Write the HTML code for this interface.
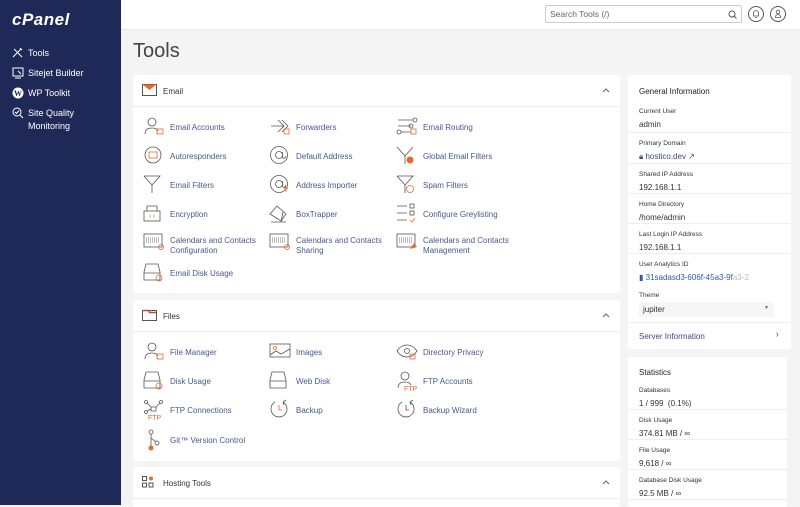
<!DOCTYPE html>
<html><head><meta charset="utf-8"><style>
*{box-sizing:border-box;margin:0;padding:0}
body{width:800px;height:505px;overflow:hidden;background:#f4f4f5;font-family:"Liberation Sans",sans-serif;position:relative;color:#333}
.side{position:absolute;left:0;top:0;width:121px;height:505px;background:#1f2957;color:#fff}
.logo{position:absolute;left:12px;top:10px;font-size:17px;font-weight:bold;font-style:italic;letter-spacing:0.5px}
.nav{position:absolute;left:12px;font-size:9px;color:#fff}
.nav svg{position:absolute;left:0;top:0}
.nav span{position:absolute;left:16px;top:0;white-space:nowrap;line-height:12.5px}
.top{position:absolute;left:121px;top:0;width:679px;height:30px;background:#fff;border-bottom:1px solid #e8e8e8}
.search{position:absolute;left:545px;top:5px;width:197px;height:18px;border:1px solid #ccc;border-radius:2px;font-size:8.5px;color:#666;padding:3px 4px}
.circ{position:absolute;top:6px;width:16px;height:16px;border:1px solid #555;border-radius:50%}
h1{position:absolute;left:133px;top:40px;font-size:20px;font-weight:normal;color:#444}
.panel{position:absolute;background:#fff;border-radius:2px}
.ph{position:absolute;left:0;right:0;top:0;height:32px;border-bottom:1px solid #eee;font-size:8px;color:#333}
.ph span{position:absolute;left:30px;top:12px}
.ph svg.ic{position:absolute;left:9px;top:9px}
.ph .car{position:absolute;right:10px;top:13px}
.it{position:absolute;font-size:8px;color:#48598a;line-height:9.5px}
.it svg{position:absolute;left:-27px;top:-7px}
.it svg *{stroke-width:0.8}
.it span{white-space:nowrap}
.rp{position:absolute;background:#fff;border-radius:2px}
.rp h3{position:absolute;left:11px;font-size:8px;font-weight:normal;color:#222}
.row{position:absolute;left:0;right:0;border-bottom:1px solid #eee}
.row .l{position:absolute;left:11px;top:7px;font-size:6.5px;color:#333}
.row .v{position:absolute;left:11px;top:19px;font-size:8px;color:#333}
</style></head><body>
<div class="side">
<div class="logo">cPanel</div>
<div class="nav" style="top:47px"><svg width="11" height="11" viewBox="0 0 11 11" fill="none" stroke="#fff" stroke-width="1"><path d="M1 10L9 2M2 2l8 8M8 1l2 2"/></svg><span>Tools</span></div>
<div class="nav" style="top:67px"><svg width="12" height="12" viewBox="0 0 12 12" fill="none" stroke="#fff" stroke-width="1"><rect x="1" y="1" width="10" height="8"/><path d="M3 11h6M6 4l3 3"/></svg><span>Sitejet Builder</span></div>
<div class="nav" style="top:87px"><svg width="12" height="12" viewBox="0 0 12 12"><circle cx="6" cy="6" r="5.5" fill="#fff"/><text x="6" y="9" font-size="8" text-anchor="middle" fill="#1f2957" font-family="Liberation Serif" font-weight="bold">W</text></svg><span>WP Toolkit</span></div>
<div class="nav" style="top:107px"><svg width="12" height="12" viewBox="0 0 12 12" fill="none" stroke="#fff" stroke-width="1"><circle cx="5" cy="5" r="4"/><path d="M8 8l3 3M3 5l1.5 1.5L7 3.5"/></svg><span>Site Quality<br>Monitoring</span></div>
</div>
<div class="top"></div>
<div class="search">Search Tools (/)<svg style="position:absolute;right:4px;top:4px" width="9" height="9" viewBox="0 0 9 9" fill="none" stroke="#555"><circle cx="4" cy="4" r="3"/><path d="M6 6l2.5 2.5"/></svg></div>
<div class="circ" style="left:748px"><svg width="14" height="14" viewBox="0 0 14 14" fill="none" stroke="#555" stroke-width="0.8"><path d="M4.5 9V6a2.5 2.5 0 0 1 5 0v3zM6 10.5h2"/></svg></div>
<div class="circ" style="left:770px"><svg width="14" height="14" viewBox="0 0 14 14" fill="none" stroke="#555" stroke-width="0.8"><circle cx="7" cy="5" r="1.8"/><path d="M4.5 10.5c0-2 1-3 2.5-3s2.5 1 2.5 3z"/></svg></div>
<h1>Tools</h1>

<div class="panel" style="left:133px;top:75px;width:487px;height:218px">
<div class="ph"><svg class="ic" width="15" height="12" viewBox="0 0 15 12"><rect x="0.5" y="0.5" width="14" height="11" fill="none" stroke="#555"/><path d="M0.5 0.5h14L7.5 6z" fill="#e8672a"/></svg><span>Email</span><svg class="car" width="8" height="5" viewBox="0 0 8 5" fill="none" stroke="#666"><path d="M1 4l3-3 3 3"/></svg></div>
</div>
<div class="panel" style="left:133px;top:300px;width:487px;height:161px">
<div class="ph"><svg class="ic" width="15" height="12" viewBox="0 0 15 12"><rect x="0.5" y="1.5" width="14" height="10" fill="none" stroke="#555"/><path d="M0.5 1.5h6l1 2h7" fill="none" stroke="#b5522a" stroke-width="1.5"/></svg><span>Files</span><svg class="car" width="8" height="5" viewBox="0 0 8 5" fill="none" stroke="#666"><path d="M1 4l3-3 3 3"/></svg></div>
</div>
<div class="panel" style="left:133px;top:467px;width:487px;height:40px">
<div class="ph"><svg class="ic" width="12" height="12" viewBox="0 0 12 12" fill="none" stroke="#555"><rect x="0.5" y="0.5" width="4" height="4"/><rect x="0.5" y="7" width="4" height="4"/><rect x="7" y="7" width="4" height="4"/><circle cx="9" cy="2.5" r="2" fill="#e8672a" stroke="none"/></svg><span>Hosting Tools</span><svg class="car" width="8" height="5" viewBox="0 0 8 5" fill="none" stroke="#666"><path d="M1 4l3-3 3 3"/></svg></div>
</div>

<div class="it" style="left:170px;top:123px"><svg width="22" height="20" viewBox="0 0 22 20" fill="none" stroke="#555"><circle cx="9" cy="6" r="4"/><path d="M2 18c0-5 4-6 7-6s5 1 6 3"/><rect x="14" y="13" width="6" height="5" stroke="#e8672a"/></svg><span>Email Accounts</span></div>
<div class="it" style="left:296px;top:123px"><svg width="22" height="20" viewBox="0 0 22 20" fill="none" stroke="#555"><path d="M2 10h13M9 4l6 6-6 6M13 4l6 6-6 6"/><rect x="15" y="13" width="5" height="5" stroke="#e8672a"/></svg><span>Forwarders</span></div>
<div class="it" style="left:423px;top:123px"><svg width="22" height="20" viewBox="0 0 22 20" fill="none" stroke="#555"><path d="M2 4h15M2 10h13M5 16h10"/><circle cx="19" cy="4" r="2"/><circle cx="15" cy="10" r="2"/><circle cx="3" cy="16" r="2"/><rect x="15" y="13" width="5" height="5" stroke="#e8672a"/></svg><span>Email Routing</span></div>

<div class="it" style="left:170px;top:152px"><svg width="22" height="20" viewBox="0 0 22 20" fill="none" stroke="#555"><circle cx="10" cy="10" r="8"/><rect x="6" y="7" width="8" height="6" stroke="#e8672a"/></svg><span>Autoresponders</span></div>
<div class="it" style="left:296px;top:152px"><svg width="22" height="20" viewBox="0 0 22 20" fill="none" stroke="#555"><circle cx="10" cy="10" r="8.5"/><circle cx="10" cy="10" r="3.5"/><path d="M13.5 7v5c0 2 3 2 3-1"/></svg><span>Default Address</span></div>
<div class="it" style="left:423px;top:152px"><svg width="22" height="20" viewBox="0 0 22 20" fill="none" stroke="#555"><path d="M1 2l8 9v8M17 2l-8 9"/><circle cx="14" cy="15" r="3.5" fill="#e8672a" stroke="none"/></svg><span>Global Email Filters</span></div>

<div class="it" style="left:170px;top:181px"><svg width="22" height="20" viewBox="0 0 22 20" fill="none" stroke="#555"><path d="M1 2h16L9 11v8M1 2l8 9"/></svg><span>Email Filters</span></div>
<div class="it" style="left:296px;top:181px"><svg width="22" height="20" viewBox="0 0 22 20" fill="none" stroke="#555"><circle cx="10" cy="10" r="8.5"/><circle cx="10" cy="10" r="3.5"/><path d="M13.5 7v5c0 2 3 2 3-1"/><path d="M17 18v-5M15 15l2-2 2 2" stroke="#e8672a"/></svg><span>Address Importer</span></div>
<div class="it" style="left:423px;top:181px"><svg width="22" height="20" viewBox="0 0 22 20" fill="none" stroke="#555"><path d="M1 2h16L9 11v8M1 2l8 9"/><circle cx="14" cy="15" r="3.5" stroke="#e8672a"/></svg><span>Spam Filters</span></div>

<div class="it" style="left:170px;top:210px"><svg width="22" height="20" viewBox="0 0 22 20" fill="none" stroke="#555"><rect x="1" y="8" width="16" height="10"/><path d="M4 8V3h10v5"/><circle cx="7" cy="13" r="0.8" fill="#e8672a" stroke="none"/><circle cx="11" cy="13" r="0.8" fill="#e8672a" stroke="none"/></svg><span>Encryption</span></div>
<div class="it" style="left:296px;top:210px"><svg width="22" height="20" viewBox="0 0 22 20" fill="none" stroke="#555"><path d="M1 11l7-8 9 8-5 7zM2 19h15M14 9l-2 10"/></svg><span>BoxTrapper</span></div>
<div class="it" style="left:423px;top:210px"><svg width="22" height="20" viewBox="0 0 22 20" fill="none" stroke="#555"><path d="M1 3h10M1 10h10M1 17h10"/><rect x="14" y="1" width="4" height="4"/><rect x="14" y="8" width="4" height="4"/><path d="M14 17l2 2 3-4" stroke="#e8672a"/></svg><span>Configure Greylisting</span></div>

<div class="it" style="left:170px;top:236px"><svg width="22" height="22" viewBox="0 0 22 22" fill="none" stroke="#555"><rect x="1" y="5" width="18" height="13"/><path d="M3 9h14M3 11h14M3 13h14" stroke-dasharray="1 1"/><circle cx="18" cy="18" r="2.5" stroke="#e8672a"/></svg><span>Calendars and Contacts<br>Configuration</span></div>
<div class="it" style="left:296px;top:236px"><svg width="22" height="22" viewBox="0 0 22 22" fill="none" stroke="#555"><rect x="1" y="5" width="18" height="13"/><path d="M3 9h14M3 11h14M3 13h14" stroke-dasharray="1 1"/><circle cx="18" cy="18" r="2.5" stroke="#e8672a"/></svg><span>Calendars and Contacts<br>Sharing</span></div>
<div class="it" style="left:423px;top:236px"><svg width="22" height="22" viewBox="0 0 22 22" fill="none" stroke="#555"><rect x="1" y="5" width="18" height="13"/><path d="M3 9h14M3 11h14M3 13h14" stroke-dasharray="1 1"/><path d="M14 20l4-6 3 4z" fill="#e8672a" stroke="none"/></svg><span>Calendars and Contacts<br>Management</span></div>

<div class="it" style="left:170px;top:269px"><svg width="22" height="20" viewBox="0 0 22 20" fill="none" stroke="#555"><path d="M3 2h12l2 8v8H1v-8z M1 11h16"/><circle cx="16" cy="16" r="3" stroke="#e8672a"/></svg><span>Email Disk Usage</span></div>

<div class="it" style="left:170px;top:348px"><svg width="22" height="20" viewBox="0 0 22 20" fill="none" stroke="#555"><circle cx="9" cy="6" r="4"/><path d="M2 18c0-5 4-6 7-6s5 1 6 3"/><rect x="14" y="13" width="6" height="5" stroke="#e8672a"/></svg><span>File Manager</span></div>
<div class="it" style="left:296px;top:348px"><svg width="22" height="20" viewBox="0 0 22 20" fill="none" stroke="#555"><rect x="1" y="3" width="20" height="13"/><path d="M1 14l6-4 5 3 9-5"/><circle cx="6" cy="7" r="1.5" stroke="#e8672a"/></svg><span>Images</span></div>
<div class="it" style="left:423px;top:348px"><svg width="22" height="20" viewBox="0 0 22 20" fill="none" stroke="#555"><path d="M1 10c5-8 15-8 20 0c-5 8-15 8-20 0z"/><circle cx="11" cy="10" r="2.5"/><rect x="14" y="13" width="5" height="5" stroke="#e8672a"/></svg><span>Directory Privacy</span></div>

<div class="it" style="left:170px;top:377px"><svg width="22" height="20" viewBox="0 0 22 20" fill="none" stroke="#555"><path d="M3 2h12l2 8v8H1v-8z M1 11h16"/><circle cx="16" cy="16" r="3" stroke="#e8672a"/></svg><span>Disk Usage</span></div>
<div class="it" style="left:296px;top:377px"><svg width="22" height="20" viewBox="0 0 22 20" fill="none" stroke="#555"><path d="M3 2h12l2 8v8H1v-8z M1 11h16"/></svg><span>Web Disk</span></div>
<div class="it" style="left:423px;top:377px"><svg width="24" height="22" viewBox="0 0 24 22" fill="none" stroke="#555"><circle cx="9" cy="6" r="4"/><path d="M2 18c0-5 4-6 7-6s5 1 6 3"/><text x="8" y="21" font-size="7" fill="#e8672a" stroke="none">FTP</text></svg><span>FTP Accounts</span></div>

<div class="it" style="left:170px;top:406px"><svg width="24" height="22" viewBox="0 0 24 22" fill="none" stroke="#555"><circle cx="3" cy="3" r="1.5"/><circle cx="18" cy="3" r="1.5"/><circle cx="3" cy="13" r="1.5"/><path d="M4 4l4 4M17 4l-4 4M8 8h5v4H8zM4 12l4-2"/><text x="5" y="21" font-size="7" fill="#e8672a" stroke="none">FTP</text></svg><span>FTP Connections</span></div>
<div class="it" style="left:296px;top:406px"><svg width="22" height="20" viewBox="0 0 22 20" fill="none" stroke="#555"><path d="M14 3A8 8 0 1 1 6 3"/><path d="M14 3l3 -2M14 3l1 3"/><path d="M10 6v5h3" stroke="#e8672a"/></svg><span>Backup</span></div>
<div class="it" style="left:423px;top:406px"><svg width="22" height="20" viewBox="0 0 22 20" fill="none" stroke="#555"><path d="M14 3A8 8 0 1 1 6 3"/><path d="M14 3l3 -2M14 3l1 3"/><path d="M10 6v5h3"/><path d="M14 17l4-4" stroke="#e8672a"/></svg><span>Backup Wizard</span></div>

<div class="it" style="left:170px;top:436px"><svg width="22" height="22" viewBox="0 0 22 22" fill="none" stroke="#555"><circle cx="8" cy="3" r="2"/><path d="M8 5v14M8 9l5 4"/><circle cx="14" cy="14" r="2"/><circle cx="8" cy="19" r="2.5" fill="#e8672a" stroke="none"/></svg><span>Git™ Version Control</span></div>

<div class="rp" style="left:628px;top:75px;width:163px;height:274px">
<h3 style="top:12px">General Information</h3>
<div class="row" style="top:26px;height:32px"><div class="l">Current User</div><div class="v">admin</div></div>
<div class="row" style="top:58px;height:31px"><div class="l">Primary Domain</div><div class="v" style="color:#3d4b7a">🔒︎ hostico.dev ↗︎</div></div>
<div class="row" style="top:89px;height:30px"><div class="l">Shared IP Address</div><div class="v">192.168.1.1</div></div>
<div class="row" style="top:119px;height:30px"><div class="l">Home Directory</div><div class="v">/home/admin</div></div>
<div class="row" style="top:149px;height:30px"><div class="l">Last Login IP Address</div><div class="v">192.168.1.1</div></div>
<div class="row" style="top:179px;height:31px;border:0"><div class="l">User Analytics ID</div><div class="v" style="color:#2f5aa8">▮ 31sadasd3-606f-45a3-9f<span style="color:#bbb">a3-2</span></div></div>
<div class="row" style="top:210px;height:38px"><div class="l">Theme</div><div style="position:absolute;left:11px;top:17px;width:135px;height:15px;background:#f6f6f6;border-radius:2px;font-size:8px;padding:3px 4px">jupiter<span style="position:absolute;right:5px;top:3px;font-size:5px;color:#666">▼</span></div></div>
<div style="position:absolute;left:11px;top:257px;font-size:8px;color:#3d4b7a">Server Information</div>
<div style="position:absolute;right:12px;top:254px;font-size:10px;color:#666">›</div>
</div>

<div class="rp" style="left:628px;top:357px;width:159px;height:150px">
<h3 style="top:11px">Statistics</h3>
<div class="row" style="top:22px;height:31px"><div class="l" style="top:8px">Databases</div><div class="v" style="top:20px">1 / 999 &nbsp;(0.1%)</div></div>
<div class="row" style="top:53px;height:30px"><div class="l">Disk Usage</div><div class="v">374.81 MB / ∞</div></div>
<div class="row" style="top:83px;height:30px"><div class="l">File Usage</div><div class="v">9,618 / ∞</div></div>
<div class="row" style="top:113px;height:30px"><div class="l">Database Disk Usage</div><div class="v">92.5 MB / ∞</div></div>
</div>
</body></html>
